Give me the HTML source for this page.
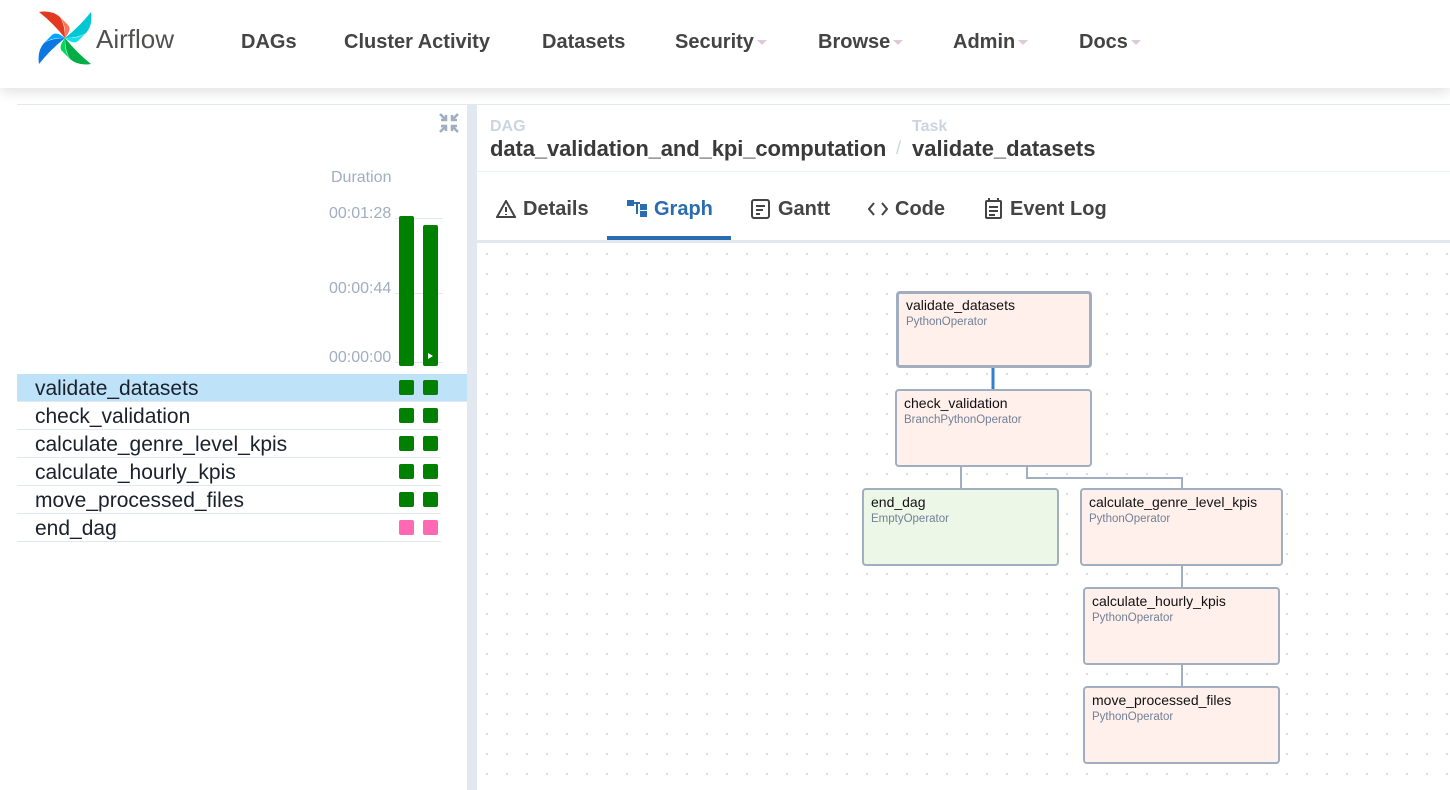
<!DOCTYPE html>
<html><head><meta charset="utf-8"><style>
*{box-sizing:border-box;margin:0;padding:0}
body{width:1450px;height:790px;overflow:hidden;background:#fff;font-family:"Liberation Sans",sans-serif;position:relative}
.hdr{position:absolute;left:0;top:0;width:1450px;height:88px;background:#fff;box-shadow:0 4px 12px rgba(0,0,0,.12);z-index:2}
.nav{position:absolute;top:31px;font-size:20px;font-weight:bold;color:#444}
.car{display:inline-block;width:0;height:0;border-left:5px solid transparent;border-right:5px solid transparent;border-top:5px solid #e0c8dc;margin-left:3px;vertical-align:3px}
.abs{position:absolute}
.row{position:absolute;left:17px;width:424px;height:28px;border-bottom:1px solid #e2e8f0;font-size:21px;color:#1a202c;padding-left:18px;line-height:29px}
.sq{position:absolute;width:15px;height:15px;border-radius:2px;background:#008000;top:6px}
.node{position:absolute;background:#fff0ec;border:2px solid #a0aec0;border-radius:4px;padding:4px 0 0 7px}
.node b{display:block;font-weight:normal;font-size:14px;color:#111}
.node i{display:block;font-style:normal;font-size:11.5px;color:#718096;margin-top:3px}
.tab{position:absolute;top:198px;font-size:20px;font-weight:bold;color:#444}
.dur{position:absolute;left:329px;font-size:16px;color:#a0aec0}
</style></head><body>
<div class="hdr">
<svg class="abs" style="left:38px;top:11px" width="55" height="54" viewBox="0 0 55 54">
<path d="M1 1 Q14 -1 22 6 Q27 14 27 27 Q15 12 1 1 Z" fill="#e43921"/>
<path d="M22 6 Q28 14 27 27 Q34 18 30 14 Z" fill="#ff7557"/>
<path d="M53 1 Q55 14 48 22 Q40 27 27 27 Q42 15 53 1 Z" fill="#00c7d4"/>
<path d="M48 22 Q40 28 27 27 Q36 34 40 30 Z" fill="#11e1ee"/>
<path d="M53 53 Q40 55 32 48 Q27 40 27 27 Q39 42 53 53 Z" fill="#00ad46"/>
<path d="M32 48 Q26 40 27 27 Q20 36 24 40 Z" fill="#04d659"/>
<path d="M1 53 Q-1 40 6 32 Q14 27 27 27 Q12 39 1 53 Z" fill="#0b77e3"/>
<path d="M6 32 Q14 26 27 27 Q18 20 14 24 Z" fill="#00a7ff"/>
</svg>
<div class="abs" style="left:96px;top:24px;font-size:26px;color:#51504f">Airflow</div>
<div class="nav" style="left:241px">DAGs</div>
<div class="nav" style="left:344px">Cluster Activity</div>
<div class="nav" style="left:542px">Datasets</div>
<div class="nav" style="left:675px">Security<span class="car"></span></div>
<div class="nav" style="left:818px">Browse<span class="car"></span></div>
<div class="nav" style="left:953px">Admin<span class="car"></span></div>
<div class="nav" style="left:1079px">Docs<span class="car"></span></div>
</div>
<div class="abs" style="left:17px;top:104px;width:1433px;height:1px;background:#e2e8f0"></div>
<div class="abs" style="left:467px;top:104px;width:10px;height:686px;background:#e2e8f0"></div>
<svg class="abs" style="left:438px;top:112px" width="22" height="22" viewBox="0 0 22 22" stroke="#a0aec0" stroke-width="2.5" fill="none"><path d="M2 2L8 8M8 3V8H3M20 2L14 8M14 3V8H19M2 20L8 14M8 19V14H3M20 20L14 14M14 19V14H19"/></svg>
<div class="dur" style="left:331px;top:169px">Duration</div>
<div class="dur" style="top:205px">00:01:28</div>
<div class="dur" style="top:280px">00:00:44</div>
<div class="dur" style="top:349px">00:00:00</div>
<div class="abs" style="left:395px;top:218px;width:48px;height:1px;background:#e2e8f0"></div>
<div class="abs" style="left:395px;top:293px;width:48px;height:1px;background:#e2e8f0"></div>
<div class="abs" style="left:395px;top:362px;width:48px;height:1px;background:#e2e8f0"></div>
<div class="abs" style="left:399px;top:216px;width:15px;height:150px;background:#008000;border-radius:2px"></div>
<div class="abs" style="left:423px;top:225px;width:15px;height:141px;background:#008000;border-radius:2px"></div>
<div class="abs" style="left:428px;top:353px;width:0;height:0;border-top:3px solid transparent;border-bottom:3px solid transparent;border-left:5px solid #fff"></div>
<div class="row" style="top:374px;background:#bee3f8;width:450px">validate_datasets<span class="sq" style="left:382px"></span><span class="sq" style="left:406px"></span></div>
<div class="row" style="top:402px">check_validation<span class="sq" style="left:382px"></span><span class="sq" style="left:406px"></span></div>
<div class="row" style="top:430px">calculate_genre_level_kpis<span class="sq" style="left:382px"></span><span class="sq" style="left:406px"></span></div>
<div class="row" style="top:458px">calculate_hourly_kpis<span class="sq" style="left:382px"></span><span class="sq" style="left:406px"></span></div>
<div class="row" style="top:486px">move_processed_files<span class="sq" style="left:382px"></span><span class="sq" style="left:406px"></span></div>
<div class="row" style="top:514px">end_dag<span class="sq" style="left:382px;background:#ff69b4"></span><span class="sq" style="left:406px;background:#ff69b4"></span></div>

<div class="abs" style="left:490px;top:118px;font-size:16px;font-weight:bold;color:#cbd5e0">DAG</div>
<div class="abs" style="left:912px;top:118px;font-size:16px;font-weight:bold;color:#cbd5e0">Task</div>
<div class="abs" style="left:490px;top:136px;font-size:22px;font-weight:bold;color:#3a3a3a;letter-spacing:-0.1px">data_validation_and_kpi_computation</div>
<div class="abs" style="left:896px;top:138px;font-size:18px;color:#cbd5e0">/</div>
<div class="abs" style="left:912px;top:136px;font-size:22px;font-weight:bold;color:#3a3a3a">validate_datasets</div>
<div class="abs" style="left:477px;top:171px;width:973px;height:1px;background:#edf2f7"></div>
<svg class="abs" style="left:496px;top:200px" width="20" height="18" viewBox="0 0 20 18" fill="none" stroke="#444" stroke-width="2"><path d="M10 1L1 17H19Z"/><path d="M10 7V12M10 14V15"/></svg>
<div class="tab" style="left:523px">Details</div>
<svg class="abs" style="left:627px;top:200px" width="22" height="18" viewBox="0 0 22 18" fill="#2b6cb0"><rect x="0" y="0" width="7" height="6"/><rect x="7" y="2" width="6" height="2"/><rect x="9" y="2" width="2" height="12"/><rect x="13" y="4" width="7" height="6"/><rect x="13" y="11" width="7" height="6"/></svg>
<div class="tab" style="left:654px;color:#2b6cb0">Graph</div>
<div class="abs" style="left:607px;top:236px;width:124px;height:4px;background:#2b6cb0"></div>
<svg class="abs" style="left:751px;top:199px" width="19" height="20" viewBox="0 0 19 20" fill="none" stroke="#444" stroke-width="2"><rect x="1" y="1" width="17" height="18" rx="2"/><path d="M5 7H14M5 11H12M5 15H9"/></svg>
<div class="tab" style="left:778px">Gantt</div>
<svg class="abs" style="left:868px;top:202px" width="20" height="14" viewBox="0 0 20 14" fill="none" stroke="#444" stroke-width="2"><path d="M6 1L1 7L6 13M14 1L19 7L14 13"/></svg>
<div class="tab" style="left:895px">Code</div>
<svg class="abs" style="left:985px;top:198px" width="17" height="21" viewBox="0 0 17 21" fill="none" stroke="#444" stroke-width="2"><rect x="1" y="3" width="15" height="17" rx="1"/><path d="M4 0V4M13 0V4M4 9H13M4 13H13M4 17H10"/></svg>
<div class="tab" style="left:1010px">Event Log</div>
<div class="abs" style="left:477px;top:240px;width:973px;height:3px;background:#e2e8f0"></div>
<div class="abs" style="left:477px;top:243px;width:973px;height:547px;background-image:radial-gradient(circle,#c4c9d2 0.7px,transparent 1.1px);background-size:20px 20px;background-position:0px 1px"></div>

<svg class="abs" style="left:0;top:0" width="1450" height="790" fill="none">
<path d="M993 367V390" stroke="#3182ce" stroke-width="3"/>
<path d="M961 466V489M1027 466V478H1182V489M1182 566V588M1182 664V687" stroke="#a0aec0" stroke-width="2"/>
</svg>
<div class="node" style="left:896px;top:291px;width:196px;height:77px;border-width:3px;padding-top:3px"><b>validate_datasets</b><i>PythonOperator</i></div>
<div class="node" style="left:895px;top:389px;width:197px;height:78px"><b>check_validation</b><i>BranchPythonOperator</i></div>
<div class="node" style="left:862px;top:488px;width:197px;height:78px;background:#edf7e8"><b>end_dag</b><i>EmptyOperator</i></div>
<div class="node" style="left:1080px;top:488px;width:203px;height:78px"><b>calculate_genre_level_kpis</b><i>PythonOperator</i></div>
<div class="node" style="left:1083px;top:587px;width:197px;height:78px"><b>calculate_hourly_kpis</b><i>PythonOperator</i></div>
<div class="node" style="left:1083px;top:686px;width:197px;height:78px"><b>move_processed_files</b><i>PythonOperator</i></div>
</body></html>
